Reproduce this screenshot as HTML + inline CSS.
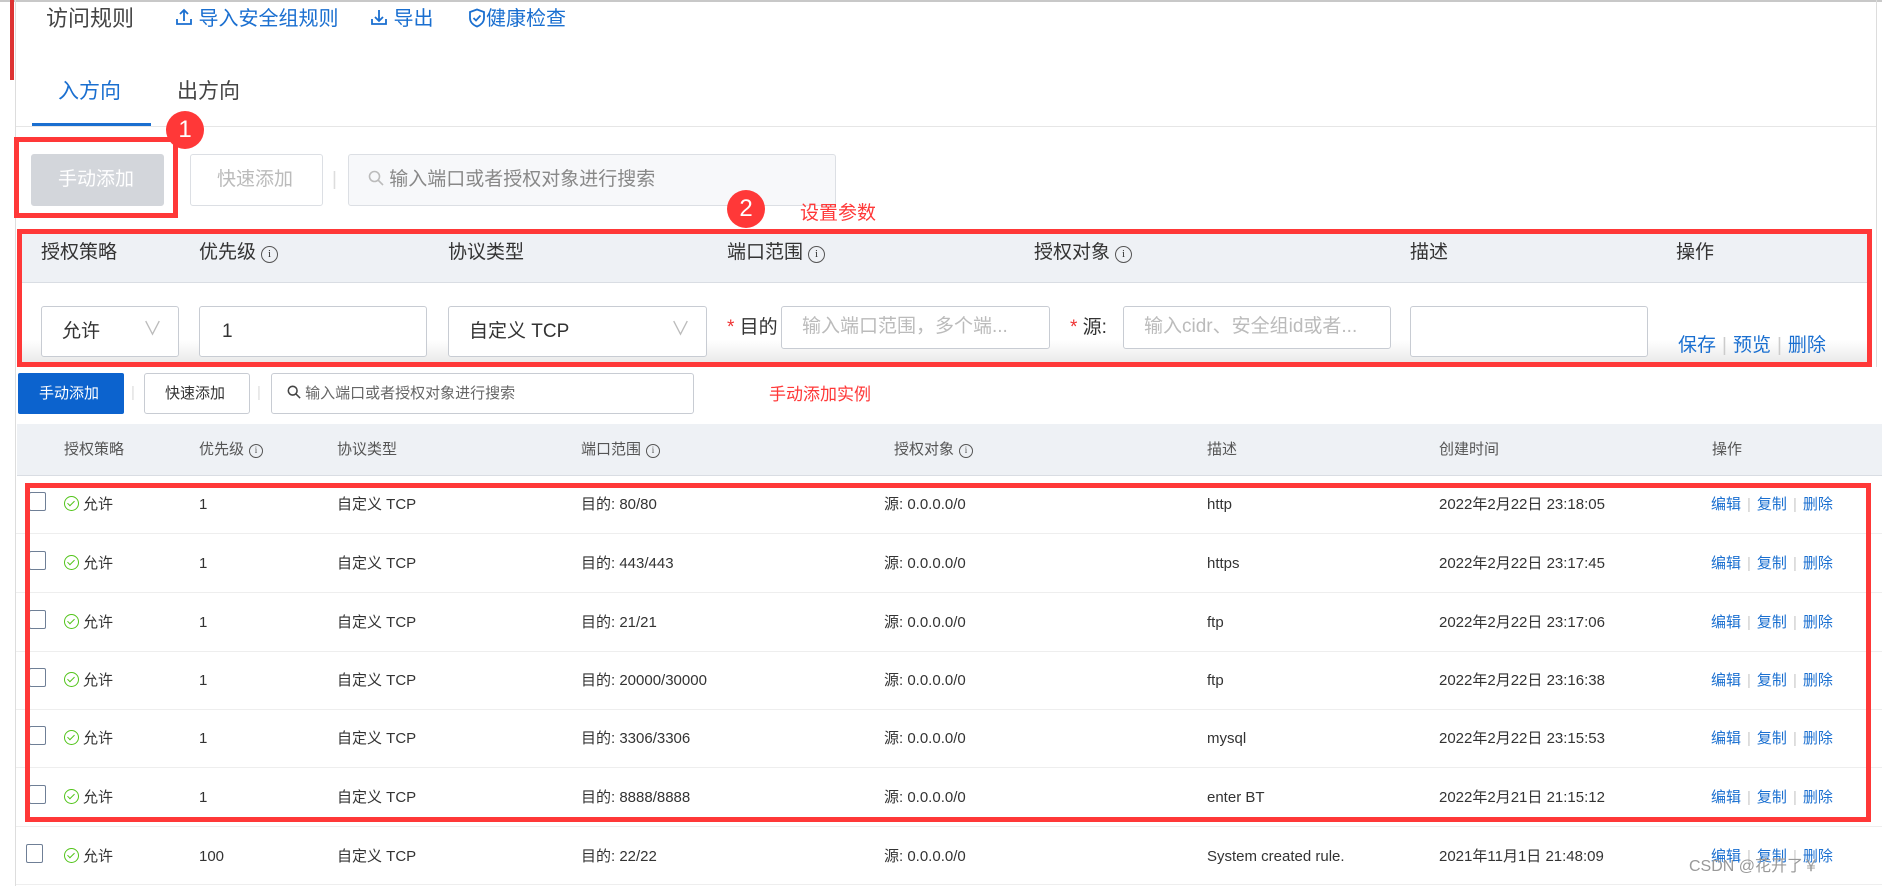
<!DOCTYPE html>
<html><head><meta charset="utf-8"><style>
*{margin:0;padding:0;box-sizing:border-box}
body{width:1882px;height:886px;overflow:hidden;background:#fff;font-family:"Liberation Sans","Noto Sans CJK SC",sans-serif;color:#333;position:relative}
.a{position:absolute;white-space:nowrap;line-height:22px}
.u{font-size:19px;line-height:26px}
.l{font-size:15px;line-height:20px}
.blue{color:#1a6fd0}
.box{position:absolute;border:1px solid #c8ccd3;border-radius:3px;background:#fff}
.red{position:absolute;border:5px solid #ff3838}
.circ{position:absolute;width:38px;height:38px;border-radius:50%;background:#ff3838;color:#fff;font-size:24px;text-align:center;line-height:38px}
.i{display:inline-block;width:17px;height:17px;border:1.5px solid #555;border-radius:50%;font-size:11px;line-height:14px;text-align:center;vertical-align:1px;margin-left:5px;font-family:"Liberation Serif",serif}
.il{width:14px;height:14px;font-size:9px;line-height:11px;border-width:1.2px}
.cb{position:absolute;width:17px;height:19px;border:1.5px solid #6f7f96;border-radius:2px;background:#fff}
.ok{display:inline-block;width:15px;height:15px;border:1.5px solid #52c41a;border-radius:50%;vertical-align:-2px;margin-right:4px;position:relative}
.ok:after{content:"";position:absolute;left:3.5px;top:2px;width:3px;height:6px;border:solid #52c41a;border-width:0 1.5px 1.5px 0;transform:rotate(45deg)}
.sep{color:#ccc;margin:0 6px}
</style></head><body>
<div class="a" style="left:0;top:0;width:1882px;height:2px;background:#c8c8c8"></div>
<div class="a" style="left:10px;top:0;width:4px;height:80px;background:#d33"></div>
<div class="a" style="left:15px;top:0;width:1px;height:886px;background:#ddd"></div>
<div class="a" style="left:1876px;top:0;width:1px;height:367px;background:#ddd"></div>

<div class="a" style="left:46px;top:4px;font-size:22px;line-height:30px;color:#444">访问规则</div>
<div class="a u blue" style="left:175px;top:6px;font-size:20px"><svg width="18" height="20" viewBox="0 0 18 20" style="vertical-align:-2px"><path d="M9 14V3M5 7l4-4 4 4M2 12v5h14v-5" fill="none" stroke="#1a6fd0" stroke-width="1.8"/></svg> 导入安全组规则</div>
<div class="a u blue" style="left:370px;top:6px;font-size:20px"><svg width="18" height="20" viewBox="0 0 18 20" style="vertical-align:-2px"><path d="M9 3v11M5 10l4 4 4-4M2 12v5h14v-5" fill="none" stroke="#1a6fd0" stroke-width="1.8"/></svg> 导出</div>
<div class="a u blue" style="left:468px;top:6px;font-size:20px"><svg width="18" height="20" viewBox="0 0 18 20" style="vertical-align:-3px"><path d="M9 1.5 L16 4 V10 C16 14 13 17 9 18.5 C5 17 2 14 2 10 V4 Z" fill="none" stroke="#1a6fd0" stroke-width="1.8"/><path d="M5.5 10 L8 12.5 L12.5 7.5" fill="none" stroke="#1a6fd0" stroke-width="1.8"/></svg>健康检查</div>

<div class="a blue" style="left:58px;top:78px;font-size:21px;line-height:28px">入方向</div>
<div class="a" style="left:177px;top:78px;font-size:21px;line-height:28px;color:#444">出方向</div>
<div class="a" style="left:16px;top:126px;width:1860px;height:1px;background:#e6e6e6"></div>
<div class="a" style="left:32px;top:123px;width:119px;height:3px;background:#1a6fd0"></div>

<div class="box" style="left:31px;top:154px;width:133px;height:52px;background:#d3d6db;border-color:#d3d6db"></div>
<div class="a u" style="left:58px;top:167px;color:#fff">手动添加</div>
<div class="box" style="left:190px;top:154px;width:133px;height:52px;border-color:#dcdfe4"></div>
<div class="a u" style="left:217px;top:167px;color:#bbb">快速添加</div>
<div class="a u" style="left:332px;top:167px;color:#ddd">|</div>
<div class="box" style="left:348px;top:154px;width:488px;height:52px;background:#f7f8fa;border-color:#dcdfe4"></div>
<div class="a u" style="left:368px;top:167px;color:#888"><svg width="16" height="16" viewBox="0 0 16 16" style="vertical-align:-1px"><circle cx="6.5" cy="6.5" r="5" fill="none" stroke="#bbb" stroke-width="1.6"/><path d="M10 10l5 5" stroke="#bbb" stroke-width="1.6"/></svg> 输入端口或者授权对象进行搜索</div>
<div class="red" style="left:14px;top:137px;width:164px;height:81px"></div>
<div class="circ" style="left:166px;top:111px">1</div>

<div class="a" style="left:16px;top:219px;width:1860px;height:148px;background:#fff"></div>
<div class="a" style="left:20px;top:233px;width:1848px;height:50px;background:#eef1f5;border-bottom:1px solid #d9dde3"></div>
<div class="a" style="left:20px;top:340px;width:1848px;height:24px;background:linear-gradient(#fff,#e8e8e8)"></div>
<div class="a u" style="left:41px;top:240px">授权策略</div>
<div class="a u" style="left:199px;top:240px">优先级<span class="i">i</span></div>
<div class="a u" style="left:448px;top:240px">协议类型</div>
<div class="a u" style="left:727px;top:240px">端口范围<span class="i">i</span></div>
<div class="a u" style="left:1034px;top:240px">授权对象<span class="i">i</span></div>
<div class="a u" style="left:1410px;top:240px">描述</div>
<div class="a u" style="left:1676px;top:240px">操作</div>

<div class="box" style="left:41px;top:306px;width:138px;height:51px"></div>
<div class="a u" style="left:62px;top:319px">允许</div><div class="a u" style="left:143px;top:317px;color:#bbb">∨</div>
<div class="box" style="left:199px;top:306px;width:228px;height:51px"></div>
<div class="a u" style="left:222px;top:319px">1</div>
<div class="box" style="left:448px;top:306px;width:259px;height:51px"></div>
<div class="a u" style="left:469px;top:319px">自定义 TCP</div><div class="a u" style="left:671px;top:317px;color:#bbb">∨</div>
<div class="a u" style="left:727px;top:315px"><span style="color:#e33">*</span> 目的</div>
<div class="box" style="left:781px;top:306px;width:269px;height:43px"></div>
<div class="a u" style="left:802px;top:314px;color:#bbb">输入端口范围，多个端...</div>
<div class="a u" style="left:1070px;top:315px"><span style="color:#e33">*</span> 源:</div>
<div class="box" style="left:1123px;top:306px;width:268px;height:43px"></div>
<div class="a u" style="left:1144px;top:314px;color:#bbb">输入cidr、安全组id或者...</div>
<div class="box" style="left:1410px;top:306px;width:238px;height:51px"></div>
<div class="a u blue" style="left:1678px;top:333px">保存<span class="sep">|</span>预览<span class="sep">|</span>删除</div>
<div class="red" style="left:17px;top:229px;width:1855px;height:138px"></div>
<div class="circ" style="left:727px;top:190px">2</div>
<div class="a u" style="left:800px;top:201px;color:#ff3838">设置参数</div>

<div class="a" style="left:18px;top:373px;width:106px;height:41px;background:#0c63ce;border-radius:2px"></div>
<div class="a l" style="left:39px;top:384px;color:#fff">手动添加</div>
<div class="a l" style="left:131px;top:383px;color:#ddd">|</div>
<div class="box" style="left:144px;top:373px;width:106px;height:41px"></div>
<div class="a l" style="left:165px;top:384px">快速添加</div>
<div class="a l" style="left:257px;top:383px;color:#ddd">|</div>
<div class="box" style="left:271px;top:373px;width:423px;height:41px"></div>
<div class="a l" style="left:287px;top:384px;color:#666"><svg width="14" height="14" viewBox="0 0 16 16" style="vertical-align:-1px"><circle cx="6.5" cy="6.5" r="5" fill="none" stroke="#444" stroke-width="1.8"/><path d="M10 10l5 5" stroke="#444" stroke-width="1.8"/></svg> 输入端口或者授权对象进行搜索</div>
<div class="a" style="left:769px;top:384px;font-size:17px;color:#ff3838">手动添加实例</div>

<div class="a" style="left:17px;top:424px;width:1865px;height:52px;background:#eef1f5;border-bottom:1px solid #d9dde3"></div>
<div class="a l" style="left:64px;top:440px;color:#555">授权策略</div>
<div class="a l" style="left:199px;top:440px;color:#555">优先级<span class="i il">i</span></div>
<div class="a l" style="left:337px;top:440px;color:#555">协议类型</div>
<div class="a l" style="left:581px;top:440px;color:#555">端口范围<span class="i il">i</span></div>
<div class="a l" style="left:894px;top:440px;color:#555">授权对象<span class="i il">i</span></div>
<div class="a l" style="left:1207px;top:440px;color:#555">描述</div>
<div class="a l" style="left:1439px;top:440px;color:#555">创建时间</div>
<div class="a l" style="left:1712px;top:440px;color:#555">操作</div>

<div class="a" style="left:16px;top:533px;width:1866px;height:1px;background:#eee"></div>
<div class="a" style="left:16px;top:592px;width:1866px;height:1px;background:#eee"></div>
<div class="a" style="left:16px;top:651px;width:1866px;height:1px;background:#eee"></div>
<div class="a" style="left:16px;top:709px;width:1866px;height:1px;background:#eee"></div>
<div class="a" style="left:16px;top:767px;width:1866px;height:1px;background:#eee"></div>
<div class="a" style="left:16px;top:826px;width:1866px;height:1px;background:#eee"></div>
<div class="a" style="left:16px;top:884px;width:1866px;height:1px;background:#eee"></div>

<div class="cb" style="left:29px;top:492px"></div><div class="a l" style="left:64px;top:495px"><span class="ok"></span>允许</div><div class="a l" style="left:199px;top:495px">1</div><div class="a l" style="left:337px;top:495px">自定义 TCP</div><div class="a l" style="left:581px;top:495px">目的: 80/80</div><div class="a l" style="left:884px;top:495px">源: 0.0.0.0/0</div><div class="a l" style="left:1207px;top:495px">http</div><div class="a l" style="left:1439px;top:495px">2022年2月22日 23:18:05</div><div class="a l blue" style="left:1711px;top:495px">编辑<span class="sep">|</span>复制<span class="sep">|</span>删除</div>
<div class="cb" style="left:29px;top:551px"></div><div class="a l" style="left:64px;top:554px"><span class="ok"></span>允许</div><div class="a l" style="left:199px;top:554px">1</div><div class="a l" style="left:337px;top:554px">自定义 TCP</div><div class="a l" style="left:581px;top:554px">目的: 443/443</div><div class="a l" style="left:884px;top:554px">源: 0.0.0.0/0</div><div class="a l" style="left:1207px;top:554px">https</div><div class="a l" style="left:1439px;top:554px">2022年2月22日 23:17:45</div><div class="a l blue" style="left:1711px;top:554px">编辑<span class="sep">|</span>复制<span class="sep">|</span>删除</div>
<div class="cb" style="left:29px;top:610px"></div><div class="a l" style="left:64px;top:613px"><span class="ok"></span>允许</div><div class="a l" style="left:199px;top:613px">1</div><div class="a l" style="left:337px;top:613px">自定义 TCP</div><div class="a l" style="left:581px;top:613px">目的: 21/21</div><div class="a l" style="left:884px;top:613px">源: 0.0.0.0/0</div><div class="a l" style="left:1207px;top:613px">ftp</div><div class="a l" style="left:1439px;top:613px">2022年2月22日 23:17:06</div><div class="a l blue" style="left:1711px;top:613px">编辑<span class="sep">|</span>复制<span class="sep">|</span>删除</div>
<div class="cb" style="left:29px;top:668px"></div><div class="a l" style="left:64px;top:671px"><span class="ok"></span>允许</div><div class="a l" style="left:199px;top:671px">1</div><div class="a l" style="left:337px;top:671px">自定义 TCP</div><div class="a l" style="left:581px;top:671px">目的: 20000/30000</div><div class="a l" style="left:884px;top:671px">源: 0.0.0.0/0</div><div class="a l" style="left:1207px;top:671px">ftp</div><div class="a l" style="left:1439px;top:671px">2022年2月22日 23:16:38</div><div class="a l blue" style="left:1711px;top:671px">编辑<span class="sep">|</span>复制<span class="sep">|</span>删除</div>
<div class="cb" style="left:29px;top:726px"></div><div class="a l" style="left:64px;top:729px"><span class="ok"></span>允许</div><div class="a l" style="left:199px;top:729px">1</div><div class="a l" style="left:337px;top:729px">自定义 TCP</div><div class="a l" style="left:581px;top:729px">目的: 3306/3306</div><div class="a l" style="left:884px;top:729px">源: 0.0.0.0/0</div><div class="a l" style="left:1207px;top:729px">mysql</div><div class="a l" style="left:1439px;top:729px">2022年2月22日 23:15:53</div><div class="a l blue" style="left:1711px;top:729px">编辑<span class="sep">|</span>复制<span class="sep">|</span>删除</div>
<div class="cb" style="left:29px;top:785px"></div><div class="a l" style="left:64px;top:788px"><span class="ok"></span>允许</div><div class="a l" style="left:199px;top:788px">1</div><div class="a l" style="left:337px;top:788px">自定义 TCP</div><div class="a l" style="left:581px;top:788px">目的: 8888/8888</div><div class="a l" style="left:884px;top:788px">源: 0.0.0.0/0</div><div class="a l" style="left:1207px;top:788px">enter BT</div><div class="a l" style="left:1439px;top:788px">2022年2月21日 21:15:12</div><div class="a l blue" style="left:1711px;top:788px">编辑<span class="sep">|</span>复制<span class="sep">|</span>删除</div>
<div class="cb" style="left:26px;top:844px"></div><div class="a l" style="left:64px;top:847px"><span class="ok"></span>允许</div><div class="a l" style="left:199px;top:847px">100</div><div class="a l" style="left:337px;top:847px">自定义 TCP</div><div class="a l" style="left:581px;top:847px">目的: 22/22</div><div class="a l" style="left:884px;top:847px">源: 0.0.0.0/0</div><div class="a l" style="left:1207px;top:847px">System created rule.</div><div class="a l" style="left:1439px;top:847px">2021年11月1日 21:48:09</div><div class="a l blue" style="left:1711px;top:847px">编辑<span class="sep">|</span>复制<span class="sep">|</span>删除</div>

<div class="red" style="left:25px;top:483px;width:1846px;height:339px"></div>
<div class="a" style="left:1689px;top:856px;font-size:16px;color:#999">CSDN @花开了￥</div>
</body></html>
